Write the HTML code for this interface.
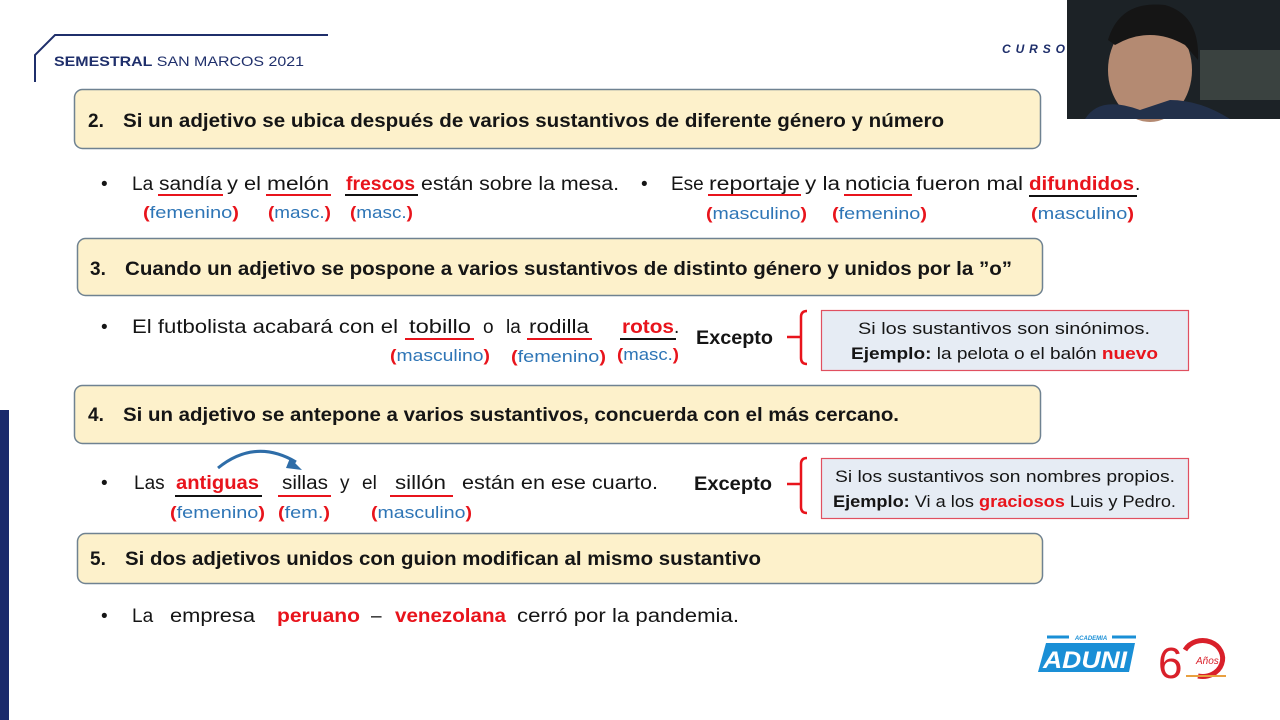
<!DOCTYPE html>
<html><head><meta charset="utf-8"><style>
html,body{margin:0;padding:0;background:#fff;width:1280px;height:720px;overflow:hidden}
svg{display:block}
text{font-family:"Liberation Sans",sans-serif}
.n{font-size:19px;fill:#151515}
.h{font-size:19px;font-weight:bold;fill:#151515}
.r{font-size:19px;font-weight:bold;fill:#e8141c}
.l{font-size:17px;fill:#2e75b6}
.p{font-weight:bold;fill:#e8141c}
.bx{font-size:17px;fill:#151515}
</style></head><body>
<svg width="1280" height="720" viewBox="0 0 1280 720" xmlns="http://www.w3.org/2000/svg">
<!-- header -->
<path d="M328 35 L55 35 L35 55 L35 82" fill="none" stroke="#1f2f6b" stroke-width="2"/>
<text x="54" y="66" font-size="14" fill="#1f2f6b" textLength="250" lengthAdjust="spacingAndGlyphs"><tspan font-weight="bold">SEMESTRAL</tspan> SAN MARCOS 2021</text>
<text x="1002" y="53" font-size="12" font-weight="bold" font-style="italic" fill="#1f2f6b" textLength="63" lengthAdjust="spacing">CURSO</text>
<!-- webcam -->
<rect x="1067" y="0" width="213" height="119" fill="#1c2226"/>
<rect x="1200" y="50" width="80" height="50" fill="#3a4240"/>
<ellipse cx="1150" cy="70" rx="42" ry="52" fill="#b48a72"/>
<path d="M1108 40 Q1120 0 1165 5 Q1200 15 1198 60 L1185 45 Q1150 25 1115 45 Z" fill="#151515"/>
<path d="M1085 119 Q1100 95 1140 110 L1170 100 Q1200 100 1230 119 Z" fill="#22304a"/>
<!-- left bar -->
<rect x="0" y="410" width="9" height="310" fill="#1a2a6c"/>

<!-- box 2 -->
<rect x="74.5" y="89.5" width="966" height="59" rx="8" fill="#fdf1cb" stroke="#6f8291" stroke-width="1.5"/>
<text class="h" x="88" y="127">2.</text>
<text class="h" x="123" y="127" textLength="821" lengthAdjust="spacingAndGlyphs">Si un adjetivo se ubica después de varios sustantivos de diferente género y número</text>

<!-- row 1 -->
<text class="n" x="101" y="190">•</text>
<text class="n" x="132" y="190">La</text>
<text class="n" x="159" y="190" textLength="63" lengthAdjust="spacingAndGlyphs">sandía</text>
<text class="n" x="227" y="190" textLength="34" lengthAdjust="spacingAndGlyphs">y el</text>
<text class="n" x="267" y="190" textLength="62" lengthAdjust="spacingAndGlyphs">melón</text>
<text class="r" x="346" y="190" textLength="69" lengthAdjust="spacingAndGlyphs">frescos</text>
<text class="n" x="421" y="190" textLength="198" lengthAdjust="spacingAndGlyphs">están sobre la mesa.</text>
<line x1="158" y1="195" x2="223" y2="195" stroke="#e8141c" stroke-width="2"/>
<line x1="266" y1="195" x2="331" y2="195" stroke="#e8141c" stroke-width="2"/>
<line x1="345" y1="195" x2="418" y2="195" stroke="#111" stroke-width="2"/>
<text class="n" x="641" y="190">•</text>
<text class="n" x="671" y="190">Ese</text>
<text class="n" x="709" y="190" textLength="91" lengthAdjust="spacingAndGlyphs">reportaje</text>
<text class="n" x="805" y="190" textLength="35" lengthAdjust="spacingAndGlyphs">y la</text>
<text class="n" x="845" y="190" textLength="65" lengthAdjust="spacingAndGlyphs">noticia</text>
<text class="n" x="916" y="190" textLength="107" lengthAdjust="spacingAndGlyphs">fueron mal</text>
<text class="r" x="1029" y="190" textLength="105" lengthAdjust="spacingAndGlyphs">difundidos</text>
<text class="n" x="1135" y="190">.</text>
<line x1="708" y1="195" x2="801" y2="195" stroke="#e8141c" stroke-width="2"/>
<line x1="844" y1="195" x2="912" y2="195" stroke="#e8141c" stroke-width="2"/>
<line x1="1029" y1="196" x2="1137" y2="196" stroke="#111" stroke-width="2"/>
<text class="l" x="143" y="218" textLength="96" lengthAdjust="spacingAndGlyphs"><tspan class="p">(</tspan>femenino<tspan class="p">)</tspan></text>
<text class="l" x="268" y="218" textLength="63" lengthAdjust="spacingAndGlyphs"><tspan class="p">(</tspan>masc.<tspan class="p">)</tspan></text>
<text class="l" x="350" y="218" textLength="63" lengthAdjust="spacingAndGlyphs"><tspan class="p">(</tspan>masc.<tspan class="p">)</tspan></text>
<text class="l" x="706" y="219" textLength="101" lengthAdjust="spacingAndGlyphs"><tspan class="p">(</tspan>masculino<tspan class="p">)</tspan></text>
<text class="l" x="832" y="219" textLength="95" lengthAdjust="spacingAndGlyphs"><tspan class="p">(</tspan>femenino<tspan class="p">)</tspan></text>
<text class="l" x="1031" y="219" textLength="103" lengthAdjust="spacingAndGlyphs"><tspan class="p">(</tspan>masculino<tspan class="p">)</tspan></text>

<!-- box 3 -->
<rect x="77.5" y="238.5" width="965" height="57" rx="8" fill="#fdf1cb" stroke="#6f8291" stroke-width="1.5"/>
<text class="h" x="90" y="275">3.</text>
<text class="h" x="125" y="275" textLength="887" lengthAdjust="spacingAndGlyphs">Cuando un adjetivo se pospone a varios sustantivos de distinto género y unidos por la ”o”</text>

<!-- row 2 -->
<text class="n" x="101" y="333">•</text>
<text class="n" x="132" y="333" textLength="266" lengthAdjust="spacingAndGlyphs">El futbolista acabará con  el</text>
<text class="n" x="409" y="333" textLength="62" lengthAdjust="spacingAndGlyphs">tobillo</text>
<text class="n" x="483" y="333">o</text>
<text class="n" x="506" y="333">la</text>
<text class="n" x="529" y="333" textLength="60" lengthAdjust="spacingAndGlyphs">rodilla</text>
<text class="r" x="622" y="333" textLength="52" lengthAdjust="spacingAndGlyphs">rotos</text>
<text class="n" x="674" y="333">.</text>
<line x1="405" y1="339" x2="474" y2="339" stroke="#e8141c" stroke-width="2"/>
<line x1="527" y1="339" x2="592" y2="339" stroke="#e8141c" stroke-width="2"/>
<line x1="620" y1="339" x2="676" y2="339" stroke="#111" stroke-width="2"/>
<text class="l" x="390" y="361" textLength="100" lengthAdjust="spacingAndGlyphs"><tspan class="p">(</tspan>masculino<tspan class="p">)</tspan></text>
<text class="l" x="511" y="362" textLength="95" lengthAdjust="spacingAndGlyphs"><tspan class="p">(</tspan>femenino<tspan class="p">)</tspan></text>
<text class="l" x="617" y="360" textLength="62" lengthAdjust="spacingAndGlyphs"><tspan class="p">(</tspan>masc.<tspan class="p">)</tspan></text>
<text class="h" x="696" y="344" textLength="77" lengthAdjust="spacingAndGlyphs">Excepto</text>
<path d="M787 337 L801 337 M807 311 Q801 311 801 317 L801 358 Q801 364 807 364" fill="none" stroke="#e8141c" stroke-width="2.5"/>
<rect x="821.5" y="310.5" width="367" height="60" fill="#e6ecf4" stroke="#e05060" stroke-width="1.2"/>
<text class="bx" x="1004" y="334" text-anchor="middle" textLength="292" lengthAdjust="spacingAndGlyphs">Si los sustantivos son sinónimos.</text>
<text class="bx" x="851" y="359" textLength="307" lengthAdjust="spacingAndGlyphs"><tspan font-weight="bold">Ejemplo:</tspan> la pelota o el balón <tspan font-weight="bold" fill="#e8141c">nuevo</tspan></text>

<!-- box 4 -->
<rect x="74.5" y="385.5" width="966" height="58" rx="8" fill="#fdf1cb" stroke="#6f8291" stroke-width="1.5"/>
<text class="h" x="88" y="421">4.</text>
<text class="h" x="123" y="421" textLength="776" lengthAdjust="spacingAndGlyphs">Si un adjetivo se antepone a varios sustantivos, concuerda con el más cercano.</text>

<!-- row 3 -->
<path d="M218 468 Q255 438 296 462" fill="none" stroke="#2e6da8" stroke-width="3"/>
<path d="M290 458 L302 470 L286 468 Z" fill="#2e6da8"/>
<text class="n" x="101" y="489">•</text>
<text class="n" x="134" y="489">Las</text>
<text class="r" x="176" y="489" textLength="83" lengthAdjust="spacingAndGlyphs">antiguas</text>
<text class="n" x="282" y="489" textLength="46" lengthAdjust="spacingAndGlyphs">sillas</text>
<text class="n" x="340" y="489">y</text>
<text class="n" x="362" y="489">el</text>
<text class="n" x="395" y="489" textLength="51" lengthAdjust="spacingAndGlyphs">sillón</text>
<text class="n" x="462" y="489" textLength="196" lengthAdjust="spacingAndGlyphs">están en ese cuarto.</text>
<line x1="175" y1="496" x2="262" y2="496" stroke="#111" stroke-width="2"/>
<line x1="278" y1="496" x2="331" y2="496" stroke="#e8141c" stroke-width="2"/>
<line x1="390" y1="496" x2="453" y2="496" stroke="#e8141c" stroke-width="2"/>
<text class="l" x="170" y="518" textLength="95" lengthAdjust="spacingAndGlyphs"><tspan class="p">(</tspan>femenino<tspan class="p">)</tspan></text>
<text class="l" x="278" y="518" textLength="52" lengthAdjust="spacingAndGlyphs"><tspan class="p">(</tspan>fem.<tspan class="p">)</tspan></text>
<text class="l" x="371" y="518" textLength="101" lengthAdjust="spacingAndGlyphs"><tspan class="p">(</tspan>masculino<tspan class="p">)</tspan></text>
<text class="h" x="694" y="490" textLength="78" lengthAdjust="spacingAndGlyphs">Excepto</text>
<path d="M787 484 L801 484 M807 458 Q801 458 801 464 L801 507 Q801 513 807 513" fill="none" stroke="#e8141c" stroke-width="2.5"/>
<rect x="821.5" y="458.5" width="367" height="60" fill="#e6ecf4" stroke="#e05060" stroke-width="1.2"/>
<text class="bx" x="835" y="482" textLength="340" lengthAdjust="spacingAndGlyphs">Si los sustantivos son nombres propios.</text>
<text class="bx" x="833" y="507" textLength="343" lengthAdjust="spacingAndGlyphs"><tspan font-weight="bold">Ejemplo:</tspan> Vi a los <tspan font-weight="bold" fill="#e8141c">graciosos</tspan> Luis y Pedro.</text>

<!-- box 5 -->
<rect x="77.5" y="533.5" width="965" height="50" rx="8" fill="#fdf1cb" stroke="#6f8291" stroke-width="1.5"/>
<text class="h" x="90" y="565">5.</text>
<text class="h" x="125" y="565" textLength="636" lengthAdjust="spacingAndGlyphs">Si dos adjetivos unidos con guion modifican al mismo sustantivo</text>

<!-- row 4 -->
<text class="n" x="101" y="622">•</text>
<text class="n" x="132" y="622">La</text>
<text class="n" x="170" y="622" textLength="85" lengthAdjust="spacingAndGlyphs">empresa</text>
<text class="r" x="277" y="622" textLength="83" lengthAdjust="spacingAndGlyphs">peruano</text>
<text class="n" x="371" y="622">–</text>
<text class="r" x="395" y="622" textLength="111" lengthAdjust="spacingAndGlyphs">venezolana</text>
<text class="n" x="517" y="622" textLength="222" lengthAdjust="spacingAndGlyphs">cerró por la pandemia.</text>

<!-- logos -->
<line x1="1047" y1="637" x2="1069" y2="637" stroke="#1a8fd6" stroke-width="3"/>
<line x1="1112" y1="637" x2="1136" y2="637" stroke="#1a8fd6" stroke-width="3"/>
<text x="1091" y="640" font-size="6" font-weight="bold" font-style="italic" fill="#1a8fd6" text-anchor="middle">ACADEMIA</text>
<path d="M1046 643 L1135 643 L1129 672 L1038 672 Z" fill="#1a8fd6"/>
<text x="1085" y="668" font-size="24" font-weight="bold" font-style="italic" fill="#fff" text-anchor="middle" textLength="84" lengthAdjust="spacingAndGlyphs">ADUNI</text>
<text x="1158" y="678" font-size="44" fill="#d9202a" font-family="Liberation Serif">6</text>
<path d="M1185 650 A20 18 0 1 1 1198 676" fill="none" stroke="#d9202a" stroke-width="5"/>
<text x="1196" y="664" font-size="10" font-style="italic" fill="#d9202a">Años</text>
<path d="M1186 676 L1226 676" stroke="#e8a040" stroke-width="2"/>
</svg>
</body></html>
